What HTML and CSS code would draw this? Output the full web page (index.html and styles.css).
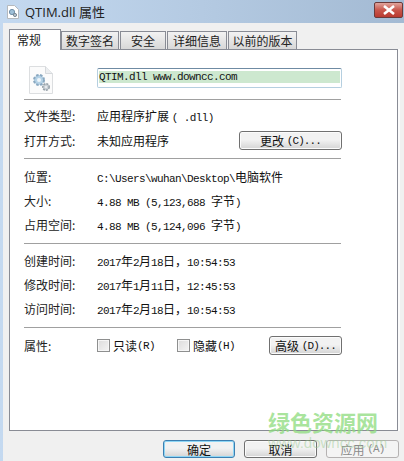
FILE: index.html
```html
<!DOCTYPE html>
<html lang="zh-CN">
<head>
  <meta charset="UTF-8">
  <title>QTIM.dll 属性</title>
  <link rel="stylesheet" href="styles.css">
</head>
<body>
  <div class="window">
    <div class="titlebar">
      <svg class="title-icon" width="12" height="14" viewBox="0 0 12 14">
        <path d="M.5.5h7l4 4v9H.5z" fill="#fff" stroke="#b5b9bd"/>
        <circle cx="5" cy="7" r="2.6" fill="#9fc0d8" stroke="#6f8ea8"/>
        <circle cx="8" cy="10" r="1.6" fill="#b9c6cf" stroke="#7c8a96"/>
      </svg>
      <span class="title-text">QTIM.dll 属性</span>
      <div class="close-btn">
        <svg width="14" height="10" viewBox="0 0 14 10"><path d="M2 1l10 8M12 1L2 9" stroke="#fff" stroke-width="2.6"/></svg>
      </div>
    </div>
    <div class="dialog">
      <div class="tabs">
        <div class="tab active">常规</div>
        <div class="tab tab-sign">数字签名</div>
        <div class="tab tab-safe">安全</div>
        <div class="tab tab-detail">详细信息</div>
        <div class="tab tab-prev">以前的版本</div>
      </div>
      <div class="panel">
        <div class="name-row">
          <svg class="file-icon" width="24" height="28" viewBox="0 0 24 28">
            <path d="M.5.5h16l7 7v20H.5z" fill="#fbfbfb" stroke="#dcdee0"/>
            <path d="M16.5.5v7h7" fill="#eceef0" stroke="#d6d9dc"/>
            <circle cx="10" cy="14" r="5" fill="#b5d2e6" stroke="#8aa8c0" stroke-width="2" stroke-dasharray="2.5 1.5"/>
            <circle cx="10" cy="14" r="2" fill="#eef5fa"/>
            <circle cx="17" cy="21" r="3.2" fill="#c9d0d5" stroke="#98a2aa" stroke-width="1.6" stroke-dasharray="2 1"/>
            <circle cx="17" cy="21" r="1" fill="#eef1f3"/>
          </svg>
          <div class="name-box"><span class="mono selected">QTIM.dll www.downcc.com</span></div>
        </div>
        <hr class="sep">
        <div class="row row-type"><span class="label">文件类型:</span><span class="value">应用程序扩展 <span class="mono">( .dll)</span></span></div>
        <div class="row row-open">
          <span class="label">打开方式:</span><span class="value">未知应用程序</span>
          <div class="btn btn-change">更改 <span class="mono">(C)...</span></div>
        </div>
        <hr class="sep sep-open">
        <div class="row"><span class="label">位置:</span><span class="value"><span class="mono">C:\Users\wuhan\Desktop\</span>电脑软件</span></div>
        <div class="row"><span class="label">大小:</span><span class="value"><span class="mono">4.88 MB (5,123,688 </span>字节<span class="mono">)</span></span></div>
        <div class="row"><span class="label">占用空间:</span><span class="value"><span class="mono">4.88 MB (5,124,096 </span>字节<span class="mono">)</span></span></div>
        <hr class="sep sep-size">
        <div class="row"><span class="label">创建时间:</span><span class="value"><span class="mono">2017</span>年<span class="mono">2</span>月<span class="mono">18</span>日，<span class="mono">10:54:53</span></span></div>
        <div class="row"><span class="label">修改时间:</span><span class="value"><span class="mono">2017</span>年<span class="mono">1</span>月<span class="mono">11</span>日，<span class="mono">12:45:53</span></span></div>
        <div class="row"><span class="label">访问时间:</span><span class="value"><span class="mono">2017</span>年<span class="mono">2</span>月<span class="mono">18</span>日，<span class="mono">10:54:53</span></span></div>
        <hr class="sep sep-time">
        <div class="row row-attr">
          <span class="label">属性:</span>
          <div class="checks">
            <div class="check"><span class="box"></span>只读<span class="mono">(R)</span></div>
            <div class="check"><span class="box"></span>隐藏<span class="mono">(H)</span></div>
          </div>
          <div class="btn btn-adv">高级 <span class="mono">(D)...</span></div>
        </div>
      </div>
      <div class="footer">
        <div class="btn btn-foot btn-ok">确定</div>
        <div class="btn btn-foot">取消</div>
        <div class="btn btn-foot btn-off">应用 <span class="mono">(A)</span></div>
      </div>
    </div>
    <div class="watermark">
      <div class="wm-title">绿色资源网</div>
      <div class="wm-url">www.downcc.com</div>
    </div>
  </div>
</body>
</html>
```

FILE: styles.css
```css
html, body {
  margin: 0;
  padding: 0;
  overflow: hidden;
}
body {
  font-family: "Noto Sans CJK SC", "Liberation Sans", sans-serif;
  font-size: 12px;
  color: #111;
}
.window {
  position: relative;
  width: 404px;
  height: 461px;
  background: linear-gradient(90deg, #c4d9f0, #b4cae2 50%, #a3bad3);
  overflow: hidden;
}
.titlebar {
  display: flex;
  align-items: center;
  height: 23px;
  padding-left: 7px;
}
.title-icon {
  margin-right: 6px;
}
.title-text {
  font-family: "Open Sans", "Noto Sans CJK SC", sans-serif;
  font-size: 13px;
  color: #222;
}
.close-btn {
  display: flex;
  align-items: center;
  justify-content: center;
  width: 29px;
  height: 16px;
  margin-left: auto;
  margin-right: 1px;
  margin-bottom: 7px;
  margin-top: 3px;
  background: linear-gradient(#e0a49c, #c9564b 50%, #b93a30);
  border: 1px solid #6b3a3a;
  border-radius: 2px;
  box-sizing: border-box;
}
.dialog {
  height: 438px;
  margin-left: 3px;
  padding: 6px 0 0 6px;
  background: #f0f0f0;
  box-sizing: border-box;
}
.tabs {
  display: flex;
  height: 20px;
  position: relative;
  z-index: 1;
}
.tab {
  width: 58px;
  height: 18px;
  margin-top: 2px;
  margin-right: 1px;
  box-sizing: border-box;
  border: 1px solid #898c95;
  border-bottom: 0;
  background: linear-gradient(#f2f2f2, #d8d8d8);
  text-align: center;
  line-height: 18px;
  color: #222;
}
.tab.active {
  width: 52px;
  height: 21px;
  margin-top: 0;
  margin-right: 0;
  background: #fff;
  line-height: 19px;
  text-align: left;
  padding-left: 7px;
}
.tab-sign { width: 58px; }
.tab-safe { width: 46px; }
.tab-detail { width: 60px; }
.tab-prev { width: 69px; }
.panel {
  width: 389px;
  height: 382px;
  padding: 18px 0 0 14px;
  box-sizing: border-box;
  background: #fff;
  border: 1px solid #898c95;
  box-shadow: 1px 0 0 #fbfbfb, 2px 0 0 #fbfbfb;
}
.mono {
  font-family: "Liberation Mono", monospace;
  font-size: 11px;
  letter-spacing: -0.6px;
}
.name-row {
  display: flex;
  align-items: flex-start;
  height: 31px;
}
.file-icon {
  margin-left: 5px;
  margin-top: -2px;
}
.name-box {
  width: 245px;
  height: 20px;
  margin-left: 44px;
  padding: 2px 1px;
  box-sizing: border-box;
  border: 1px solid #b5cfe0;
  border-top-color: #6f8ba3;
  border-radius: 2px;
  background: #fff;
}
.selected {
  display: block;
  height: 12px;
  line-height: 13px;
  background: #cde8cf;
}
.sep {
  width: 317px;
  height: 1px;
  margin: 0;
  border: 0;
  background: #a0a0a0;
}
.row {
  display: flex;
  align-items: center;
  width: 318px;
  height: 24px;
}
.row-type {
  margin-top: 3px;
}
.row-open {
  height: 25px;
  margin-top: 1px;
  margin-bottom: 5px;
}
.sep-open {
  margin-bottom: 5px;
}
.sep-size {
  margin-top: 7px;
  margin-bottom: 4px;
}
.sep-time {
  margin-top: 7px;
  margin-bottom: 5px;
}
.label {
  flex: none;
  width: 73px;
  color: #222;
}
.value {
  flex: none;
  white-space: pre;
}
.btn {
  display: flex;
  align-items: center;
  justify-content: center;
  flex: none;
  box-sizing: border-box;
  height: 19px;
  border: 1px solid #707070;
  border-radius: 3px;
  background: linear-gradient(#f2f2f2 45%, #d4d4d4);
  box-shadow: inset 0 0 0 1px #fbfbfb;
  white-space: pre;
}
.btn .mono {
  letter-spacing: -0.9px;
}
.btn-change {
  width: 103px;
  margin-left: auto;
}
.row-attr {
  height: 25px;
}
.checks {
  display: flex;
}
.check {
  display: flex;
  align-items: center;
  width: 80px;
  white-space: pre;
}
.box {
  width: 13px;
  height: 13px;
  margin-right: 3px;
  box-sizing: border-box;
  border: 1px solid #8e8f8f;
  background: linear-gradient(135deg, #dcdcdc, #f4f4f4);
  box-shadow: inset 0 0 0 1px #f6f6f6;
}
.btn-adv {
  width: 73px;
  margin-left: 12px;
}
.footer {
  display: flex;
  gap: 9px;
  justify-content: flex-end;
  width: 390px;
  margin-top: 9px;
}
.btn-foot {
  width: 73px;
  height: 18px;
}
.btn-ok {
  width: 72px;
  border-color: #3c7fb1;
  box-shadow: inset 0 0 0 1px #8ed6f5;
}
.btn-off {
  border-color: #b5b2b2;
  background: #f4f4f4;
  box-shadow: none;
  color: #8a8a8a;
}
.watermark {
  position: absolute;
  left: 268px;
  top: 408px;
  width: 120px;
  pointer-events: none;
}
.wm-title {
  font-size: 22px;
  font-weight: 700;
  line-height: 26px;
  color: rgba(141, 219, 125, 0.75);
  white-space: nowrap;
}
.wm-url {
  margin-top: 2px;
  font-family: "Liberation Sans", sans-serif;
  font-size: 15px;
  line-height: 14px;
  color: rgba(150, 200, 140, 0.45);
  white-space: nowrap;
}
```
